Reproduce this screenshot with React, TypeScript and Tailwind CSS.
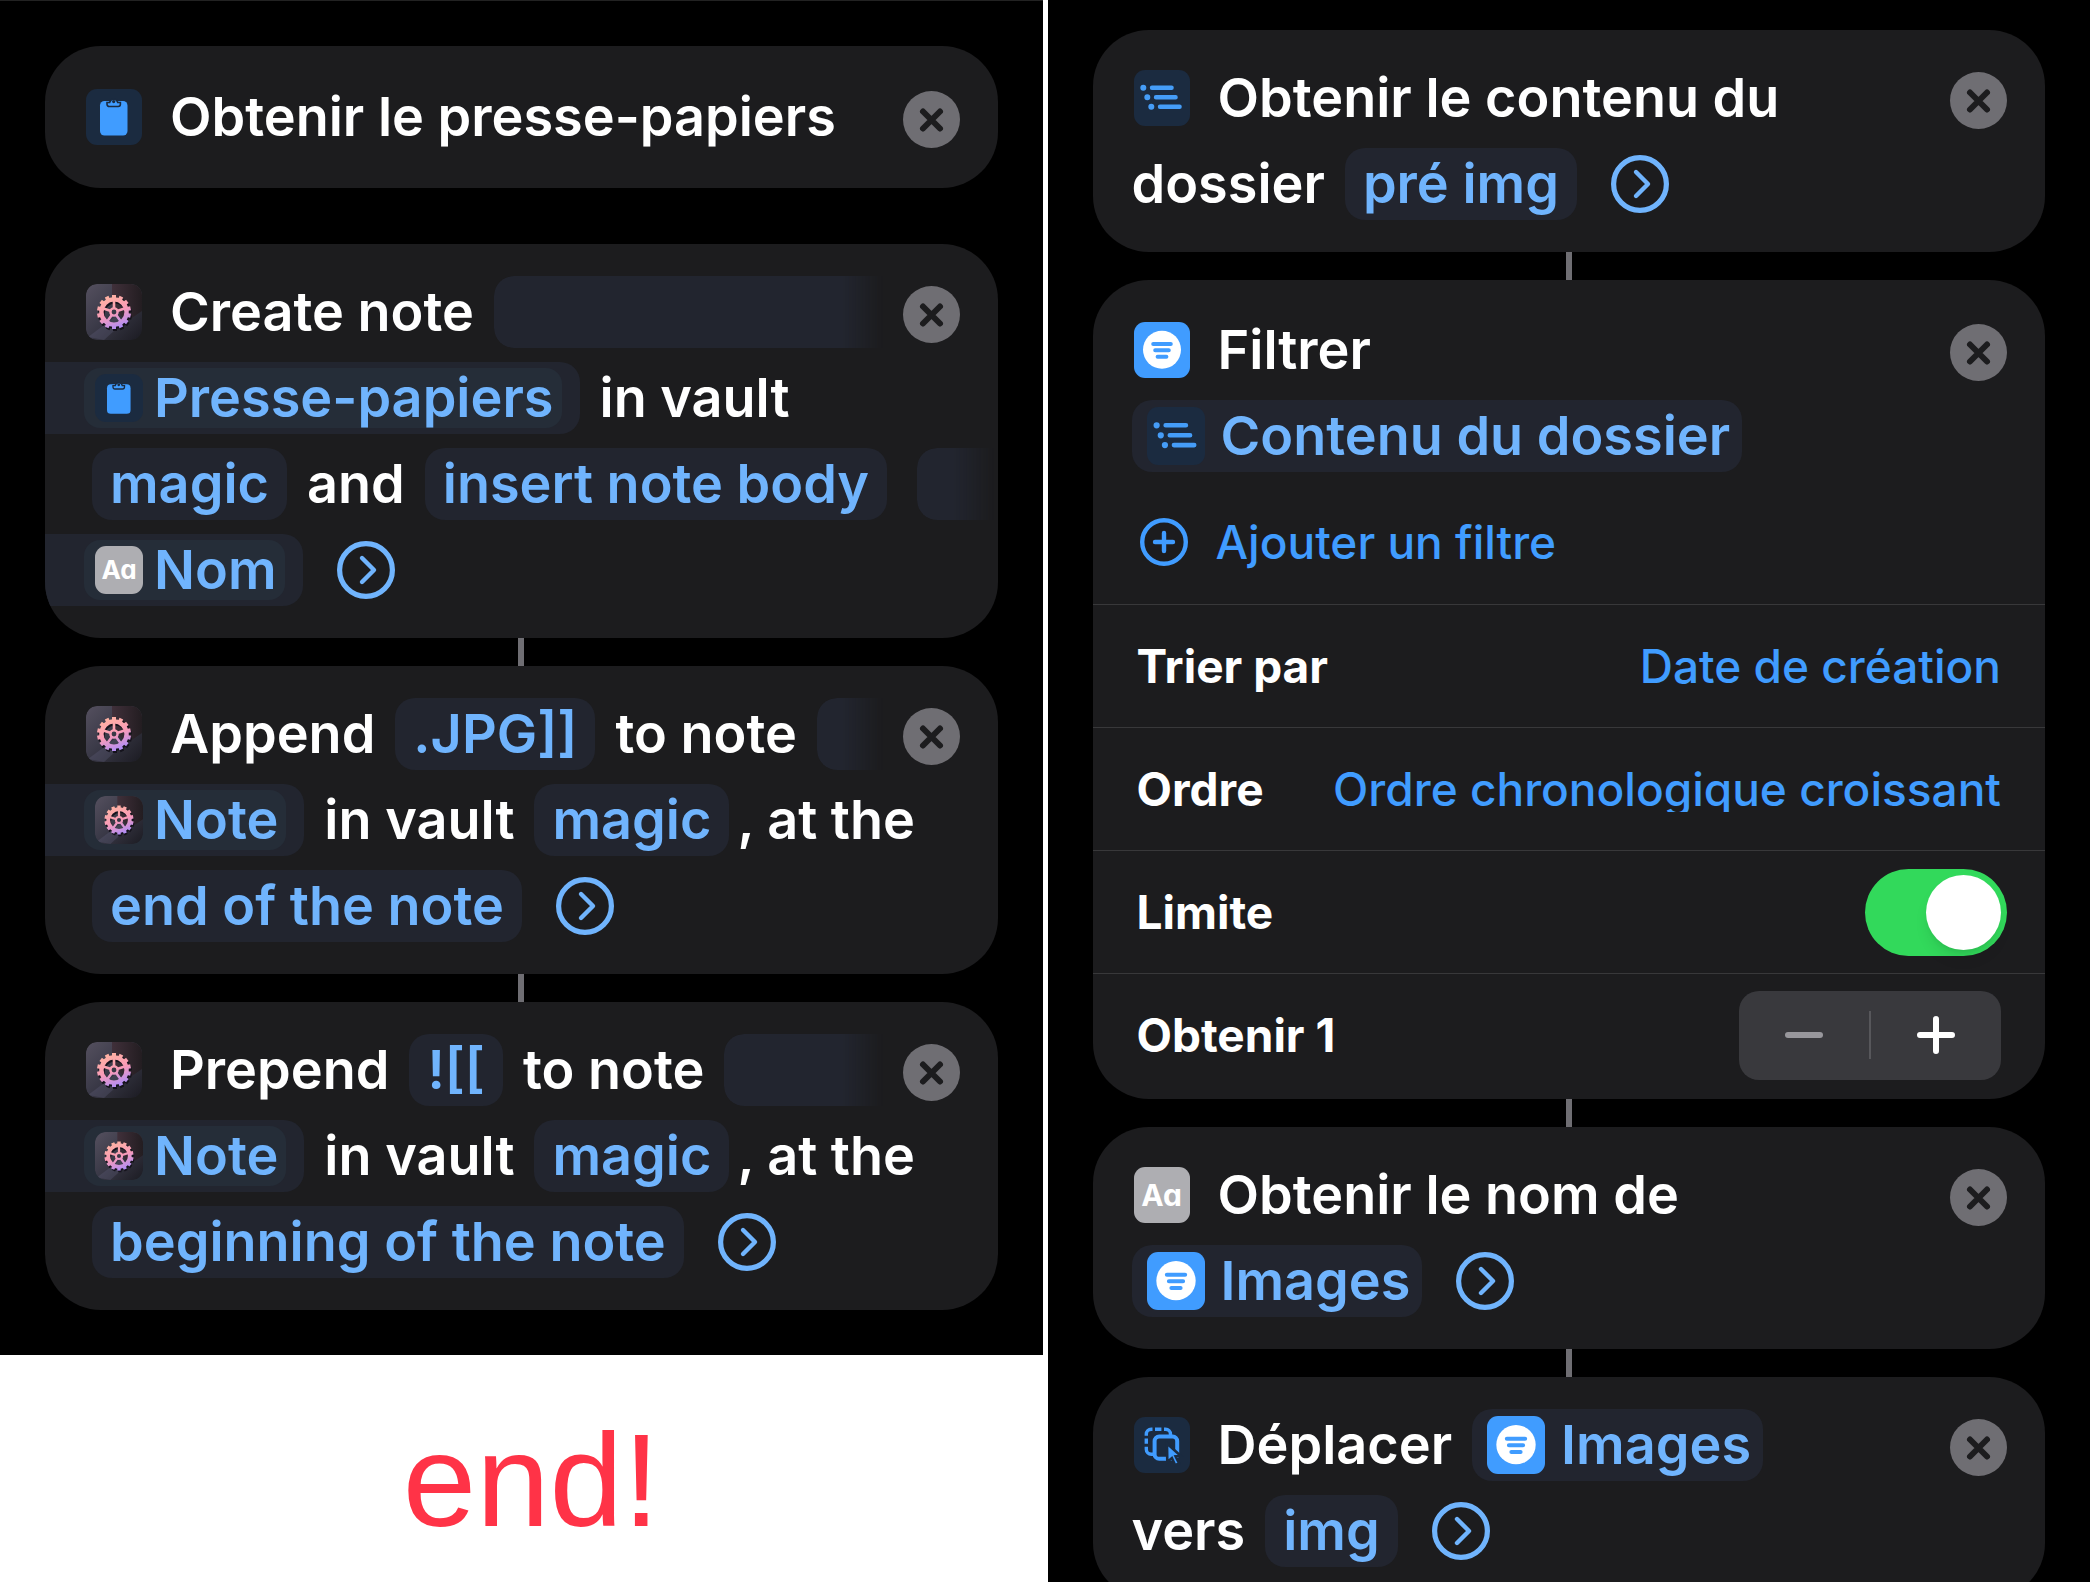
import { useState, type ReactNode } from "react";
import clsx from "clsx";

type IconName = "clipboard" | "gear" | "list" | "filter" | "text" | "move";
type Size = "sm" | "md" | "lg";

const sizes = {
  sm: "size-12",
  md: "size-14",
  lg: "size-[58px]",
};

const tiles = {
  clipboard: "bg-[#1b2b40]",
  gear: "",
  list: "bg-[#1b2b40]",
  filter: "bg-[#409cff]",
  text: "bg-[#aeaeb2]",
  move: "bg-[#1b2b40]",
};

// straight segments around the centre of the gear
function spokes(count: number, from: number, to: number) {
  return Array.from({ length: count }, (_, i) => {
    const a = (i / count) * Math.PI * 2 - Math.PI / 2;
    const x = Math.cos(a);
    const y = Math.sin(a);
    return `M${28 + x * from} ${28 + y * from}L${28 + x * to} ${28 + y * to}`;
  }).join("");
}

const teeth = spokes(14, 13, 17);
const arms = spokes(5, 4, 12);

function ClipboardIcon() {
  return (
    <svg viewBox="0 0 56 56" className="size-full">
      <rect x="14" y="12" width="27.5" height="34.5" rx="4.5" fill="#409cff" />
      <path
        d="M21 13.5h2.6a4.2 4.2 0 0 1 8.2 0h2.6v1.8a2.2 2.2 0 0 1-2.2 2.2h-9a2.2 2.2 0 0 1-2.2-2.2z"
        fill="#409cff"
        stroke="#1b2b40"
        strokeWidth="1.6"
      />
      <circle cx="27.7" cy="12.6" r="1.6" fill="#1b2b40" />
    </svg>
  );
}

function GearIcon() {
  return (
    <svg viewBox="0 0 56 56" className="size-full">
      <defs>
        <linearGradient id="gearTile" x1="0" y1="0" x2="1" y2="1">
          <stop offset="0" stopColor="#55505f" />
          <stop offset="0.5" stopColor="#393846" />
          <stop offset="1" stopColor="#1b1b22" />
        </linearGradient>
        <linearGradient id="gearFacet" x1="0" y1="0" x2="1" y2="0">
          <stop offset="0" stopColor="#40303a" />
          <stop offset="1" stopColor="#231d21" />
        </linearGradient>
        <linearGradient id="gearFill" gradientUnits="userSpaceOnUse" x1="22" y1="11" x2="36" y2="45">
          <stop offset="0" stopColor="#ffb3a0" />
          <stop offset="0.5" stopColor="#f99bb8" />
          <stop offset="1" stopColor="#a68bff" />
        </linearGradient>
      </defs>
      <rect width="56" height="56" rx="11" fill="url(#gearTile)" />
      <path d="M26 0h19a11 11 0 0 1 11 11v16L40 38 26 20z" fill="url(#gearFacet)" />
      <path d="M2 53l16 3 20-18-8-6z" fill="#6a6c8c" opacity="0.25" />
      <g fill="none" stroke="#15131c" transform="translate(1 2)">
        <circle cx="28" cy="28" r="12.6" strokeWidth="4.4" />
        <path d={teeth} strokeWidth="4" />
      </g>
      <g fill="none" stroke="url(#gearFill)">
        <circle cx="28" cy="28" r="12.6" strokeWidth="4.4" />
        <path d={teeth} strokeWidth="4" />
        <path d={arms} strokeWidth="2.6" />
        <circle cx="28" cy="28" r="3.6" strokeWidth="2.4" />
      </g>
    </svg>
  );
}

function ListIcon() {
  return (
    <svg viewBox="0 0 56 56" className="size-full" stroke="#459df8" strokeLinecap="round">
      <path d="M9.3 17.7h.01M13.3 27.3h.01M17.3 36.8h.01" strokeWidth="6" />
      <path d="M18 17.7h19.6M22 27.3h19.6M26 36.8h19.6" strokeWidth="4.4" />
    </svg>
  );
}

function FilterIcon() {
  return (
    <svg viewBox="0 0 56 56" className="size-full" stroke="#409cff" strokeLinecap="round">
      <circle cx="28" cy="27.7" r="19" fill="#fff" stroke="none" />
      <path d="M19.2 22h17.6M21.2 28.2h13.6M23.6 34.8h8.8" strokeWidth="4" />
    </svg>
  );
}

function MoveIcon() {
  return (
    <svg viewBox="0 0 56 56" className="size-full" fill="none" stroke="#409cff">
      <path
        d="M12.3 18.8v-1.5a5 5 0 0 1 5-5h1.2M21 12.3h6.4M30 12.3h1.5a5 5 0 0 1 5 5v1.5M12.3 21.6v5.2M12.3 29.8v2.4a5 5 0 0 0 5 5h2.5"
        strokeWidth="3.4"
      />
      <rect x="20.6" y="19.6" width="22.6" height="22.2" rx="4.6" fill="#1b2b40" strokeWidth="4" />
      <path d="M33 26.5l13.6 12.2-5 .6 3.4 7-3.8 1.9-3.3-7.2-4.6 4z" fill="#409cff" stroke="#1b2b40" strokeWidth="2.6" />
    </svg>
  );
}

function Tile({ name, size = "md" }: { name: IconName; size?: Size }) {
  return (
    <span
      className={clsx(
        "flex shrink-0 items-center justify-center overflow-hidden rounded-[11px]",
        sizes[size],
        tiles[name]
      )}
    >
      {name === "clipboard" && <ClipboardIcon />}
      {name === "gear" && <GearIcon />}
      {name === "list" && <ListIcon />}
      {name === "filter" && <FilterIcon />}
      {name === "move" && <MoveIcon />}
      {name === "text" && (
        <span
          className={clsx(
            "font-bold leading-none text-white [font-feature-settings:'cv11']",
            size === "sm" ? "text-[26px]" : "text-[30px]"
          )}
        >
          Aa
        </span>
      )}
    </span>
  );
}

function Close() {
  return (
    <button aria-label="Supprimer" className="mt-1 ml-auto shrink-0 rounded-full bg-[#6f6e73]">
      <svg viewBox="0 0 57 57" className="size-[57px]" stroke="#1c1c1e" strokeWidth="6" strokeLinecap="round">
        <path d="M20 20.5l17 17M37 20.5l-17 17" />
      </svg>
    </button>
  );
}

function Expand() {
  return (
    <button aria-label="Afficher plus" className="ml-3.5 shrink-0">
      <svg viewBox="0 0 58 58" className="size-[58px]" fill="none" stroke="#70b4fd" strokeLinecap="round" strokeLinejoin="round">
        <circle cx="29" cy="29" r="26.4" strokeWidth="5.2" />
        <path d="M25 17l12 12-12 12" strokeWidth="4.4" />
      </svg>
    </button>
  );
}

function Chip({ icon, children }: { icon?: IconName; children: ReactNode }) {
  return (
    <button
      className={clsx(
        "flex h-18 shrink-0 items-center gap-4 rounded-[20px] bg-[#22252f] text-[#70b4fd]",
        icon ? "pr-3 pl-[15px]" : "px-[18px]"
      )}
    >
      {icon && <Tile name={icon} size="lg" />}
      {children}
    </button>
  );
}

// value that runs on from the end of the line above
function Wrapped({ icon, children }: { icon: IconName; children: ReactNode }) {
  return (
    <button className="flex h-18 shrink-0 items-center rounded-r-[20px] bg-[#22252f] pr-[18px] pl-[39px] text-[#70b4fd]">
      <span className="flex h-15 items-center gap-[11px] rounded-2xl bg-[#252d38] pr-2 pl-[11px]">
        <Tile name={icon} size="sm" />
        {children}
      </span>
    </button>
  );
}

function Faded({ className }: { className?: string }) {
  return (
    <span
      className={clsx("h-18 flex-1 rounded-l-[20px] bg-[#22252f] mask-r-from-[calc(100%-40px)]", className)}
    />
  );
}

function Line({ className, children }: { className?: string; children: ReactNode }) {
  return <div className={clsx("flex h-18 items-center gap-5", className)}>{children}</div>;
}

function Header({ icon, children }: { icon: IconName; children: ReactNode }) {
  return (
    <Line className="pr-[38px] pl-[41px]">
      <span className="mr-2">
        <Tile name={icon} />
      </span>
      {children}
      <Close />
    </Line>
  );
}

function Card({ className = "py-8", children }: { className?: string; children: ReactNode }) {
  return (
    <section
      className={clsx("flex flex-col gap-3.5 overflow-hidden rounded-[56px] bg-[#1c1c1e]", className)}
    >
      {children}
    </section>
  );
}

function Connector() {
  return <div className="mx-auto h-7 w-1.5 bg-[#6f6e73]" />;
}

const row = "flex h-[123px] items-center justify-between border-t border-[#38383a] px-11";
const select = "appearance-none bg-transparent text-right font-medium text-[#409cff] outline-none";

function Filter() {
  const [limit, setLimit] = useState(true);
  const [count, setCount] = useState(1);

  return (
    <Card className="pt-[34px] pb-[3px]">
      <Header icon="filter">
        <span>Filtrer</span>
      </Header>
      <Line className="pl-[39px]">
        <Chip icon="list">Contenu du dossier</Chip>
      </Line>
      <div className="text-[46px] leading-none">
        <button className="mt-8 mb-[38px] ml-[47px] flex items-center gap-7 font-medium text-[#409cff]">
          <svg viewBox="0 0 48 48" className="size-12" fill="none" stroke="#409cff" strokeLinecap="round">
            <circle cx="24" cy="24" r="21.8" strokeWidth="4.4" />
            <path d="M24 15v18M15 24h18" strokeWidth="4.4" />
          </svg>
          Ajouter un filtre
        </button>
        <div className={row}>
          <label htmlFor="sort" className="font-bold">Trier par</label>
          <select id="sort" className={select}>
            <option>Date de création</option>
          </select>
        </div>
        <div className={row}>
          <label htmlFor="order" className="font-bold">Ordre</label>
          <select id="order" className={select}>
            <option>Ordre chronologique croissant</option>
          </select>
        </div>
        <div className={row}>
          <label htmlFor="limit" className="font-bold">Limite</label>
          <input
            id="limit"
            type="checkbox"
            role="switch"
            checked={limit}
            onChange={(e) => setLimit(e.target.checked)}
            className="-mr-1.5 flex h-[87px] w-[142px] appearance-none items-center rounded-full bg-[#39393d] p-1.5 before:size-[75px] before:rounded-full before:bg-white before:shadow-lg checked:justify-end checked:bg-[#32d95b]"
          />
        </div>
        <div className={row}>
          <span className="font-bold">Obtenir {count}</span>
          <div className="flex h-[89px] items-center rounded-[20px] bg-[#39393d]">
            <button
              aria-label="Moins"
              onClick={() => setCount(Math.max(1, count - 1))}
              className="flex h-full w-[130px] items-center justify-center"
            >
              <svg viewBox="0 0 40 40" className="size-10" stroke="#98979c" strokeWidth="6" strokeLinecap="round">
                <path d="M4 20h32" />
              </svg>
            </button>
            <span className="h-12 w-0.5 bg-[#57575b]" />
            <button
              aria-label="Plus"
              onClick={() => setCount(count + 1)}
              className="flex h-full w-[130px] items-center justify-center"
            >
              <svg viewBox="0 0 40 40" className="size-10" stroke="#fff" strokeWidth="6" strokeLinecap="round">
                <path d="M4 20h32M20 4v32" />
              </svg>
            </button>
          </div>
        </div>
      </div>
    </Card>
  );
}

export default function App() {
  return (
    <main className="grid h-screen grid-cols-2 gap-[5px] overflow-hidden bg-white font-[Inter,sans-serif] text-[54px] leading-none font-semibold whitespace-nowrap text-white">
      <div>
        <div className="border-t border-[#222222] bg-black px-[45px] pt-[45px] pb-[45px]">
          <Card className="py-[35px]">
            <Header icon="clipboard">
              <span>Obtenir le presse-papiers</span>
            </Header>
          </Card>
          <div className="h-14" />
          <Card>
            <Header icon="gear">
              <span>Create note</span>
              <Faded />
            </Header>
            <Line>
              <Wrapped icon="clipboard">Presse-papiers</Wrapped>
              <span>in vault</span>
            </Line>
            <Line className="pl-[47px]">
              <Chip>magic</Chip>
              <span>and</span>
              <Chip>insert note body</Chip>
              <Faded className="mr-1 ml-2.5" />
            </Line>
            <Line>
              <Wrapped icon="text">Nom</Wrapped>
              <Expand />
            </Line>
          </Card>
          <Connector />
          <Card>
            <Header icon="gear">
              <span>Append</span>
              <Chip>.JPG]]</Chip>
              <span>to note</span>
              <Faded />
            </Header>
            <Line>
              <Wrapped icon="gear">Note</Wrapped>
              <span>in vault</span>
              <span className="flex items-center gap-2">
                <Chip>magic</Chip>, at the
              </span>
            </Line>
            <Line className="pl-[47px]">
              <Chip>end of the note</Chip>
              <Expand />
            </Line>
          </Card>
          <Connector />
          <Card>
            <Header icon="gear">
              <span>Prepend</span>
              <Chip>![[</Chip>
              <span>to note</span>
              <Faded />
            </Header>
            <Line>
              <Wrapped icon="gear">Note</Wrapped>
              <span>in vault</span>
              <span className="flex items-center gap-2">
                <Chip>magic</Chip>, at the
              </span>
            </Line>
            <Line className="pl-[47px]">
              <Chip>beginning of the note</Chip>
              <Expand />
            </Line>
          </Card>
        </div>
        <p className="pt-15 pl-5 text-center font-['Liberation_Sans',sans-serif] text-[132px] leading-none font-normal text-[#ff3347]">
          end!
        </p>
      </div>

      <div className="bg-black px-[45px] pt-[30px]">
        <Card>
          <Header icon="list">
            <span>Obtenir le contenu du</span>
          </Header>
          <Line className="pl-[39px]">
            <span>dossier</span>
            <Chip>pré img</Chip>
            <Expand />
          </Line>
        </Card>
        <Connector />
        <Filter />
        <Connector />
        <Card>
          <Header icon="text">
            <span>Obtenir le nom de</span>
          </Header>
          <Line className="pl-[39px]">
            <Chip icon="filter">Images</Chip>
            <Expand />
          </Line>
        </Card>
        <Connector />
        <Card>
          <Header icon="move">
            <span>Déplacer</span>
            <Chip icon="filter">Images</Chip>
          </Header>
          <Line className="pl-[39px]">
            <span>vers</span>
            <Chip>img</Chip>
            <Expand />
          </Line>
        </Card>
      </div>
    </main>
  );
}
